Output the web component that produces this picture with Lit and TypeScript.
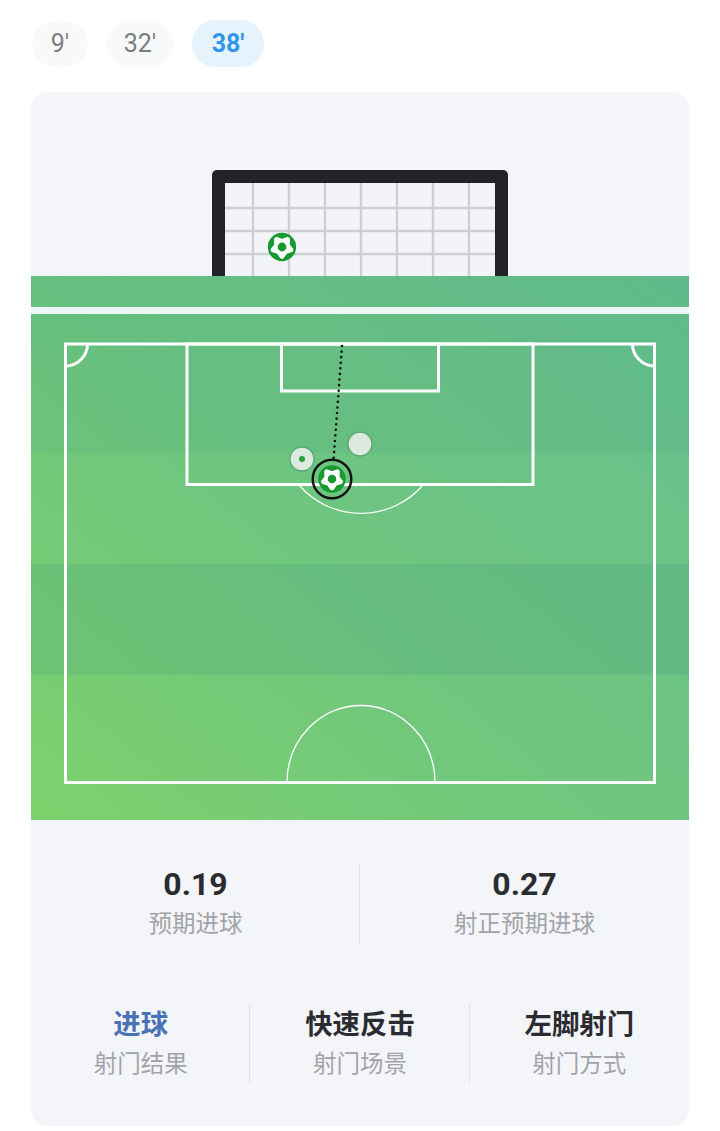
import { LitElement, html, css, svg } from "lit";
import { customElement } from "lit/decorators.js";

const starPath = (() => {
  const pts: string[] = [];
  for (let i = 0; i < 10; i++) {
    const a = ((90 + i * 36) * Math.PI) / 180;
    const r = i % 2 === 0 ? 1.0 : 0.6;
    pts.push(`${(r * Math.cos(a)).toFixed(3)},${(r * Math.sin(a)).toFixed(3)}`);
  }
  return "M" + pts.join("L") + "Z";
})();

const ball = (cx: number, cy: number, r: number) => svg`
  <g transform="translate(${cx} ${cy}) scale(${r})">
    <circle r="1" fill="#16992f"></circle>
    <path d=${starPath} fill="#fff" stroke="#fff" stroke-width="0.14" stroke-linejoin="round"></path>
    <circle r="1.06" fill="none" stroke="#16992f" stroke-width="0.2"></circle>
    <circle r="0.36" fill="#16992f"></circle>
  </g>`;

@customElement("app-root")
export class AppRoot extends LitElement {
  static styles = css`
    :host {
      display: block;
      width: 720px;
      height: 1131px;
      background: #fff;
      font-family: Roboto, "Noto Sans CJK SC", sans-serif;
      overflow: hidden;
    }
    .tabs {
      display: flex;
      align-items: center;
      gap: 18px;
      padding: 20px 0 0 32px;
      height: 47px;
    }
    .tab {
      height: 44px;
      border-radius: 22px;
      background: #f8f9fa;
      color: #7c7d81;
      font-size: 25px;
      line-height: 44px;
      text-align: center;
      box-shadow: 0 0 4px #fafbfc;
    }
    .tab.w9 { width: 56px; }
    .tab.w32 { width: 68px; }
    .tab.on {
      width: 72px;
      height: 47px;
      line-height: 47px;
      border-radius: 24px;
      background: #e6f3fd;
      color: #2f96ee;
      font-weight: 700;
    }
    .card {
      margin: 25px 31px 0;
      width: 658px;
      height: 1034px;
      border-radius: 16px;
      background: #f4f5f9;
      overflow: hidden;
      display: flex;
      flex-direction: column;
    }
    .goal {
      height: 184px;
      display: flex;
      justify-content: center;
      align-items: flex-end;
    }
    svg { display: block; }
    .row {
      display: grid;
      text-align: center;
    }
    .row.two {
      grid-template-columns: 1fr 1fr;
      margin-top: 43px;
    }
    .row.three {
      grid-template-columns: 1fr 1fr 1fr;
      margin-top: 59px;
    }
    .cell {
      box-shadow: -1px 0 0 #e0e1e5;
      display: flex;
      flex-direction: column;
      align-items: center;
    }
    .cell:first-child { box-shadow: none; }
    .row.two .cell { height: 82px; }
    .row.three .cell { height: 79px; }
    .num {
      font-size: 32px;
      line-height: 42px;
      font-weight: 700;
      color: #2b2c30;
    }
    .row.three .num {
      font-size: 27.4px;
      line-height: 42px;
    }
    .row.three .num.goalv { color: #4a73b5; }
    .lab {
      font-size: 23.5px;
      line-height: 38px;
      color: #a2a3a8;
    }
    .row.three .lab { line-height: 36px; }
  `;

  private goal() {
    const v = [41, 77, 113, 149, 185, 221, 257];
    const h = [38, 61, 84];
    return html`<svg width="296" height="106" viewBox="0 0 296 106">
      <path d="M0 106V5a5 5 0 0 1 5-5H291a5 5 0 0 1 5 5V106Z" fill="#222327"></path>
      <rect x="13" y="13" width="270" height="93" fill="#f3f4f7"></rect>
      ${v.map((x) => svg`<line x1=${x} x2=${x} y1="13" y2="106" stroke="#cfcfd3" stroke-width="2.4"></line>`)}
      ${h.map((y) => svg`<line x1="13" x2="283" y1=${y} y2=${y} stroke="#cfcfd3" stroke-width="2.4"></line>`)}
      ${ball(70, 77, 12.2)}
    </svg>`;
  }

  private pitch() {
    return html`<svg width="658" height="544" viewBox="0 0 658 544">
      <defs>
        <linearGradient id="grass" x1="0" y1="1" x2="1" y2="0">
          <stop offset="0" stop-color="#7dd16c"></stop>
          <stop offset="0.45" stop-color="#6fc67e"></stop>
          <stop offset="1" stop-color="#66c08e"></stop>
        </linearGradient>
      </defs>
      <rect width="658" height="544" fill="url(#grass)"></rect>
      <rect y="0" width="658" height="177" fill="#3f9c7c" fill-opacity="0.13"></rect>
      <rect y="288" width="658" height="111" fill="#3f9c7c" fill-opacity="0.2"></rect>
      <rect y="31" width="658" height="7" fill="#eef7f6"></rect>
      <g fill="none" stroke="#fff" stroke-width="3">
        <rect x="34.5" y="68" width="589" height="438.5"></rect>
        <rect x="156" y="68" width="346" height="140.5"></rect>
        <rect x="250.5" y="68" width="157" height="47"></rect>
        <path d="M34.5 90a22 22 0 0 0 22-22"></path>
        <path d="M623.5 90a22 22 0 0 1-22-22"></path>
        <path d="M256 506.5A74 77 0 0 1 404 506.5" stroke-width="1.3"></path>
        <path d="M268 209a82 82 0 0 0 124 0" stroke-width="1.2"></path>
      </g>
      <line x1="311" y1="70" x2="302.5" y2="184" stroke="#111" stroke-width="2.6" stroke-linecap="round" stroke-dasharray="0 5.6"></line>
      <g fill="#dbe9de" stroke="#58a873" stroke-width="1.3">
        <circle cx="271" cy="183" r="12"></circle>
        <circle cx="329" cy="168" r="12"></circle>
      </g>
      <circle cx="271" cy="183" r="3" fill="#2f9c4a"></circle>
      ${ball(301, 203, 11.8)}
      <circle cx="301" cy="203" r="19.3" fill="none" stroke="#111" stroke-width="2.4"></circle>
    </svg>`;
  }

  render() {
    return html`
      <div class="tabs">
        <div class="tab w9">9'</div>
        <div class="tab w32">32'</div>
        <div class="tab on">38'</div>
      </div>
      <div class="card">
        <div class="goal">${this.goal()}</div>
        ${this.pitch()}
        <div class="row two">
          <div class="cell"><div class="num">0.19</div><div class="lab">预期进球</div></div>
          <div class="cell"><div class="num">0.27</div><div class="lab">射正预期进球</div></div>
        </div>
        <div class="row three">
          <div class="cell"><div class="num goalv">进球</div><div class="lab">射门结果</div></div>
          <div class="cell"><div class="num">快速反击</div><div class="lab">射门场景</div></div>
          <div class="cell"><div class="num">左脚射门</div><div class="lab">射门方式</div></div>
        </div>
      </div>
    `;
  }
}
